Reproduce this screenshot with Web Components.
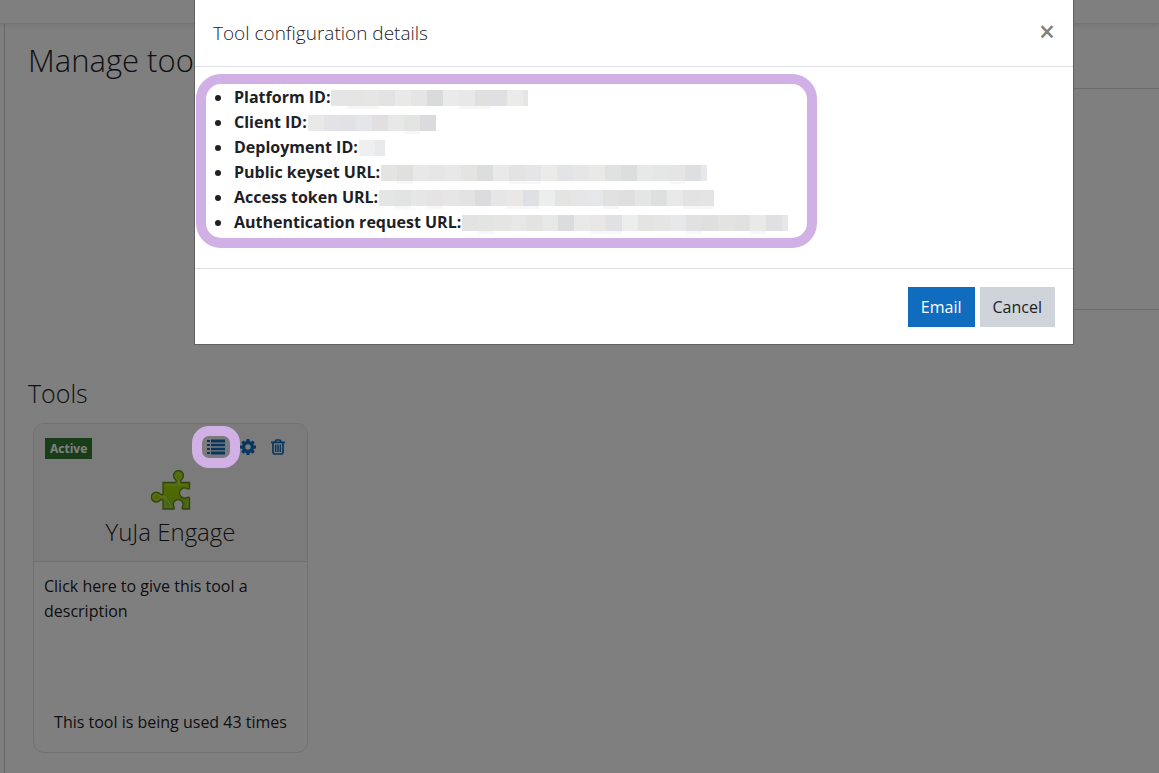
<!DOCTYPE html>
<html lang="en">
<head>
<meta charset="utf-8">
<title>Manage tools</title>
<style>
body { margin: 0; background: #fff; color: #1d2125; font: 16px/25px "Open Sans", "Noto Sans", sans-serif; overflow: hidden; }
</style>
</head>
<body>
<manage-page></manage-page>
<config-dialog heading="Tool configuration details">
  <config-list>
    <config-item label="Platform ID:" cells="e4e5e4 e5e5e4 e6e6e5 e4e3e3 e9e9e8 e6e5e5 d9dbda eaeaea e7e8e7 e0e1df e0dfe2 ebebea e8e5e7" shade="1 2 8 9" tail="5"></config-item>
    <config-item label="Client ID:" cells="e9e9e7 e3e2e4 e2e1e5 e5e6e9 e2dfe1 e8e8e9 e3e5e3 dbdbde" shade="6"></config-item>
    <config-item label="Deployment ID:" cells="efefef e9eaec" tail="10"></config-item>
    <config-item label="Public keyset URL:" cells="e4e4e3 e0e1df e8e8e8 e5e6e5 e8e8e8 e4e4e3 dcdedd e8e9e8 e2e3e2 e5e5e8 ebebe8 e2e4e7 e6e6e6 e9e9e7 dfe2e0 dcdddd e7e8e8 e5e6e6 e5e5e5 dedfe1 e7e8ec" shade="1 8 9 18" tail="6"></config-item>
    <config-item label="Access token URL:" cells="e4e5e5 e2e4e3 e6e6e6 e5e3e3 e6e6e6 e3e3e3 dcdcdf e7e6e6 e9e8e6 dfe0e3 ebeeed e4e4e2 e6e6e8 e5e7eb e1e1e1 dfdfdf e3e6e4 dedfdf e9e9e9 e3e3e3 e4e4e4" shade="1 3 8 9 14 19 20" tail="15"></config-item>
    <config-item label="Authentication request URL:" cells="e2e3e2 e3e5e3 e5e5e4 e7e7e7 e3e3e2 e5e8e6 dadcde e9e9ea e8e7e5 dfe1e4 ebeeed e4e4e2 e5e5e5 e6e8ec e1e1e2 dfdfdf e3e3e2 e1e1e1 e9e9e7 e0e0e4 e5e7ea" shade="1 8 9 14 18" tail="6"></config-item>
  </config-list>
</config-dialog>

<script>
class ShadowElement extends HTMLElement {
  connectedCallback() {
    if (!this.shadowRoot) this.attachShadow({ mode: "open" }).innerHTML = this.render();
  }
}

customElements.define("manage-page", class extends ShadowElement {
  render() {
    return `<style>
      :host { display: flex; flex-direction: column; min-height: 100vh; }
      header { height: 23px; border-bottom: 1px solid #e8e8e8; box-shadow: 0 2px 4px rgba(0,0,0,.08); }
      main { flex: 1; margin-left: 4px; border-left: 1px solid #ccc; }
      h1 { margin: 0; padding: 14px 23px 6px; font-size: 31px; line-height: 44px; font-weight: 300; }
      .register { height: 220px; margin-left: 200px; border: 1px solid #d8d8d8; border-width: 1px 0; }
      .tools { padding: 65px 28px 20px; }
      h2 { margin: 0 0 12px -5px; font-size: 25px; line-height: 36px; font-weight: 300; }
    </style>
    <header></header>
    <main>
      <h1>Manage tools</h1>
      <div class="register"></div>
      <section class="tools">
        <h2>Tools</h2>
        <tool-card name="YuJa Engage" status="Active">
          <span>Click here to give this tool a description</span>
          <span slot="usage">This tool is being used 43 times</span>
        </tool-card>
      </section>
    </main>`;
  }
});

customElements.define("tool-card", class extends ShadowElement {
  render() {
    return `<style>
      :host { display: flex; flex-direction: column; box-sizing: border-box; width: 275px; min-height: 330px; border: 1px solid #e3e3e3; border-radius: 11px; }
      header { padding: 14px 11px 10px; background: #f7f7f7; border-bottom: 1px solid #e3e3e3; border-radius: 10px 10px 0 0; text-align: center; }
      .bar { display: flex; justify-content: space-between; align-items: flex-start; height: 21px; }
      .badge { padding: 1px 5px 0; background: #357a32; color: #fff; font-size: 12px; line-height: 20px; font-weight: 700; }
      nav { display: flex; gap: 14px; padding: 1px 10px 0 0; }
      button { position: relative; display: flex; padding: 0; border: 0; background: none; color: #0f6cbf; }
      button svg { display: block; }
      .marked::after { content: ""; position: absolute; z-index: 20; inset: -13px -14px; border: 10px solid #d1b0e5; border-radius: 17px; }
      .logo { display: block; margin: 11px auto 0; }
      h3 { margin: 3px 0 0; font-size: 24px; line-height: 38px; font-weight: 300; }
      .about { flex: 1; padding: 12px 40px 0 10px; }
      .usage { text-align: center; padding: 0 0 17px; }
    </style>
    <header>
      <div class="bar">
        <span class="badge">${this.getAttribute("status")}</span>
        <nav>
          <button class="marked" aria-label="View configuration details">
            <svg width="20" height="16" viewBox="0 0 20 16" fill="currentColor"><path d="M1 1h3v2H1zM1 5h3v2H1zM1 9h3v2H1zM1 13h3v2H1zM5 0.500h14v3H5zM5 4.700h14v2.600H5zM5 8.700h14v2.600H5zM5 12.500h14v3H5z"/></svg>
          </button>
          <button aria-label="Edit">
            <svg width="16" height="16" viewBox="0 0 16 16" fill="currentColor" fill-rule="evenodd"><path d="M6.600 0h2.800l.4 2.300 1 .4 1.900-1.300 2 2-1.300 1.900.4 1 2.200.4v2.700l-2.200.4-.4 1 1.300 1.900-2 2-1.900-1.300-1 .4-.4 2.200H6.600l-.4-2.200-1-.4-1.900 1.300-2-2 1.300-1.900-.4-1L0 9.400V6.700l2.200-.4.4-1-1.300-1.900 2-2 1.900 1.300 1-.4zM8 5.300a2.700 2.700 0 1 0 0 5.400 2.700 2.700 0 0 0 0-5.400z"/></svg>
          </button>
          <button aria-label="Delete">
            <svg width="16" height="16" viewBox="0 0 16 16" fill="none" stroke="currentColor"><path stroke-width="1.700" d="M1 3.300h14M5.300 3V2l1-1h3.400l1 1v1M3 3.500V13.500l1 1.500h8l1-1.500V3.500"/><path stroke-width="1.500" d="M5.700 5.500v7.500M8 5.500v7.500M10.300 5.500v7.500"/></svg>
          </button>
        </nav>
      </div>
      <svg class="logo" width="40" height="40" viewBox="0 0 40 40" aria-hidden="true">
        <defs><linearGradient id="g" x1="0" y1="0" x2="0" y2="1"><stop offset="0" stop-color="#a0d41c"/><stop offset=".6" stop-color="#a2d204"/><stop offset="1" stop-color="#8ac03c"/></linearGradient></defs>
        <path d="M12 12.500h12.500c1.200-1 .8-2-.3-3.200a5 5 0 1 1 6.600 0c-1.100 1.200-1.500 2.200-.3 3.200H38.500v6c-1 1-2 .3-3.300-.2a5 5 0 1 0 0 9.400c1.300-.5 2.300-1 3.300 0V39h-7c-1-.8-.3-2 .2-3a4.800 4.800 0 1 0-9 0c.5 1 1 2 .2 3H12V30c-1-.9-2-.4-3 .4a5 5 0 1 1 0-6.600c1 .8 2 1.300 3 .4z" fill="url(#g)" stroke="#5d8c14" stroke-width="1.300"/>
        <path d="M14 15h12.500c2-2.500.6-4-.8-6.300a2.800 2.800 0 1 1 3.600 0C28 11 27 12.500 28.500 15h8v1M36.500 31v6h-2.500M20.500 37H14V28c-3-2-4.600-.6-6.300.8a2.800 2.800 0 1 1 0-3.600c1.700 1 3.300 2 6.300.5z" fill="none" stroke="#d4f060" stroke-opacity=".65"/>
      </svg>
      <h3>${this.getAttribute("name")}</h3>
    </header>
    <div class="about"><slot></slot></div>
    <div class="usage"><slot name="usage"></slot></div>`;
  }
});

customElements.define("config-dialog", class extends ShadowElement {
  render() {
    return `<style>
      :host { display: block; position: fixed; inset: 0; z-index: 10; padding: 0 85px 0 194px; background: rgba(0,0,0,.5); }
      section { border: 1px solid #606060; border-top: 0; background: #fff; }
      header { display: flex; justify-content: space-between; align-items: center; height: 66px; padding: 0 18px; border-bottom: 1px solid #dee2e6; }
      h2 { margin: 0; font-size: 19px; line-height: 30px; font-weight: 300; }
      button { font: inherit; border: 0; color: inherit; }
      .close { padding: 0 0 4px; background: none; color: #7f7f7f; font-size: 28px; line-height: 30px; font-weight: 600; }
      .body { padding: 7px 1px 20px; }
      footer { display: flex; justify-content: flex-end; gap: 5px; padding: 18px 18px 17px; border-top: 1px solid #dee2e6; }
      footer button { height: 40px; padding: 0 13px; background: #ced4da; }
      footer .primary { background: #0f6cbf; color: #fff; }
    </style>
    <section role="dialog" aria-labelledby="title">
      <header><h2 id="title">${this.getAttribute("heading")}</h2><button class="close" aria-label="Close">×</button></header>
      <div class="body"><slot></slot></div>
      <footer><button class="primary">Email</button><button>Cancel</button></footer>
    </section>`;
  }
});

customElements.define("config-list", class extends ShadowElement {
  connectedCallback() { this.setAttribute("role", "list"); super.connectedCallback(); }
  render() {
    return `<style>
      :host { display: block; box-sizing: border-box; max-width: 621px; padding: 1px 0 3px 28px; border: 10px solid #d1b0e5; border-radius: 25px; }
    </style><slot></slot>`;
  }
});

customElements.define("config-item", class extends ShadowElement {
  connectedCallback() { this.setAttribute("role", "listitem"); super.connectedCallback(); }
  render() {
    const shade = (this.getAttribute("shade") || "").split(" ");
    const cells = this.getAttribute("cells").split(" ")
      .map((c, i) => `<i style="background:#${c}"${shade.includes(String(i)) ? ' class="low"' : ""}></i>`).join("");
    return `<style>
      :host { display: flex; align-items: center; height: 25px; }
      :host::before { content: ""; width: 6px; height: 6px; margin: 0 13px 0 -19px; border-radius: 50%; background: #1d2125; }
      b { font-weight: 700; white-space: nowrap; }
      .value { display: flex; margin-left: 1px; }
      i { width: 16px; height: 16px; }
      i:last-child { width: ${this.getAttribute("tail") || 16}px; }
      .low { box-shadow: 0 3px #f7f7f7; }
    </style><b>${this.getAttribute("label")}</b><span class="value">${cells}</span>`;
  }
});
</script>
</body>
</html>
